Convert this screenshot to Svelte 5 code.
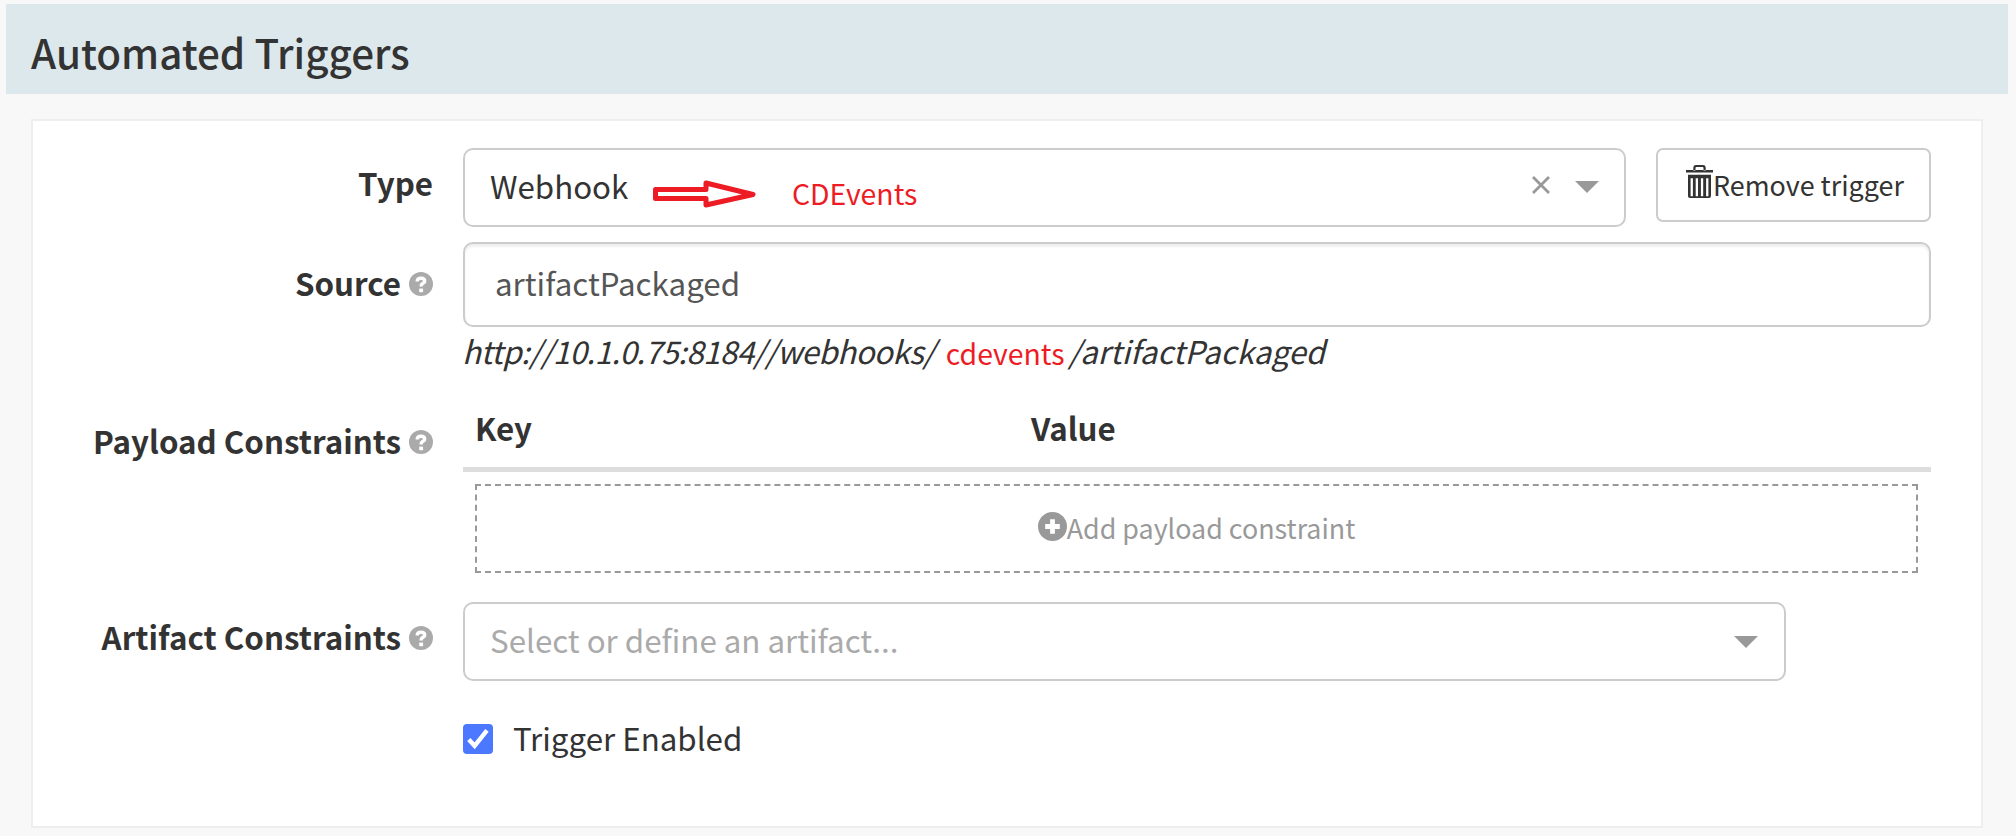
<script>
  let source = $state('artifactPackaged');
  let enabled = $state(true);
</script>

{#snippet help()}
  <svg class="help" viewBox="0 0 24 24" aria-hidden="true">
    <circle cx="12" cy="12" r="12" />
    <path d="M8.2 9.400C8.200 7 9.800 6.300 12 6.300c2.300 0 3.700 1.100 3.700 2.900 0 2.200-3.500 2-3.500 4.300v.9" />
    <rect x="10.200" y="16.600" width="3.900" height="3.600" />
  </svg>
{/snippet}

{#snippet caret()}
  <svg class="caret" viewBox="0 0 24 12" aria-hidden="true"><path d="M0 0h24L12 12z" /></svg>
{/snippet}

<main>
  <header><h1>Automated Triggers</h1></header>

  <section class="card">
    <div class="row type-row">
      <div class="label">Type</div>
      <div class="field split">
        <div class="select">
          <span class="value">Webhook</span>
          <svg class="arrow" viewBox="0 0 104 28" aria-hidden="true">
            <path d="M2.500 9.500H53V3L100 14.500 53 25v-6.500H2.500z" />
          </svg>
          <span class="note">CDEvents</span>
          <span class="grow"></span>
          <svg class="clear" viewBox="0 0 18 18" aria-hidden="true"><path d="M1 1l16 16M17 1L1 17" /></svg>
          {@render caret()}
        </div>
        <button>
          <svg class="trash" viewBox="0 0 27 33" aria-hidden="true">
            <path d="M0 5h27v2.400H0zM7.300 5.500V3Q7.300 0 10 0h7q2.700 0 2.700 3v2.500h-2.200V3q0-1-1-1h-6q-1 0-1 1v2.500zM2 9.700h23V31q0 2-2 2H4q-2 0-2-2zM4.600 13.200V31.300h2.300V13.200zM9.700 13.200V31.300h2.300V13.200zM14.900 13.200V31.300h2.300V13.200zM20.100 13.200V31.300h2.300V13.200z" fill-rule="evenodd" />
          </svg><span>Remove trigger</span>
        </button>
      </div>
    </div>

    <div class="row source-row">
      <div class="label">Source {@render help()}</div>
      <div class="field">
        <input type="text" bind:value={source} />
        <div class="url"><i class="host">http://10.1.0.75:8184//webhooks/</i><span class="note">cdevents</span><i>/{source}</i></div>
      </div>
    </div>

    <div class="row payload-row">
      <div class="label">Payload Constraints {@render help()}</div>
      <div class="field">
        <div class="thead"><span>Key</span><span>Value</span></div>
        <div class="add">
          <svg class="plus" viewBox="0 0 29 29" aria-hidden="true">
            <circle cx="14.500" cy="14.500" r="14.500" />
            <path d="M14.500 7.200v14.600M7.200 14.500h14.600" />
          </svg>Add payload constraint
        </div>
      </div>
    </div>

    <div class="row artifact-row">
      <div class="label">Artifact Constraints {@render help()}</div>
      <div class="field">
        <div class="select artifact">
          <span class="placeholder">Select or define an artifact...</span>
          <span class="grow"></span>
          {@render caret()}
        </div>
      </div>
    </div>

    <div class="row enabled-row">
      <div class="label"></div>
      <label class="check">
        <input type="checkbox" bind:checked={enabled} />
        <svg class="box" viewBox="0 0 30 30" aria-hidden="true">
          <rect width="30" height="30" rx="4" />
          {#if enabled}<path d="M5.800 15.500l5.800 6.300L24 6.300" />{/if}
        </svg>
        <span>Trigger Enabled</span>
      </label>
    </div>
  </section>
</main>

<style>
  :global(body) { margin: 0; background: #f8f8f8; }
  main {
    box-sizing: border-box;
    width: 2016px;
    height: 836px;
    padding: 4px 8px 0 6px;
    overflow: hidden;
    background: #f8f8f8;
    color: #333;
    font: 31.3px/40px "Noto Sans CJK SC", "Source Sans Pro", sans-serif;
  }
  svg { display: block; flex: none; }
  header { height: 90px; padding-left: 25px; background: #dde8ec; }
  h1 { margin: 0; font-size: 40.4px; font-weight: 500; line-height: 95px; }
  .card {
    box-sizing: border-box;
    display: flex;
    flex-direction: column;
    width: 1952px;
    height: 709px;
    margin: 25px 0 0 25px;
    padding: 27px 50px 0 0;
    border: 2px solid #eee;
    background: #fff;
  }
  .row { display: grid; grid-template-columns: 400px 1468px; column-gap: 30px; align-items: start; }
  .label { display: flex; justify-content: flex-end; gap: 8px; font-weight: 700; }
  .help { width: 24px; height: 24px; margin-top: 9px; fill: #aaa; }
  .help path { fill: none; stroke: #fff; stroke-width: 3.4; }
  .help rect { fill: #fff; }

  .type-row { height: 94px; }
  .type-row .label { padding-top: 15px; }
  .split { display: flex; justify-content: space-between; align-items: flex-start; }
  .select {
    box-sizing: border-box;
    display: flex;
    align-items: center;
    width: 1163px;
    height: 79px;
    padding: 0 25px;
    border: 2px solid #ccc;
    border-radius: 10px;
    background: #fff;
  }
  .grow { flex: 1; }
  .note { color: #ed1c24; font-size: 28.4px; }
  .value { padding-bottom: 4px; }
  .arrow {
    align-self: flex-start;
    width: 104px;
    height: 28px;
    margin: 30px 0 0 25px;
    fill: none;
    stroke: #ed1c24;
    stroke-width: 5;
    stroke-linejoin: round;
  }
  .select .note { margin: 10px 0 0 34.500px; }
  .clear { width: 18px; height: 18px; margin: 0 25px 5px 0; stroke: #999; stroke-width: 2.8; }
  .caret { width: 24px; height: 12px; margin-bottom: 1px; fill: #999; }
  button {
    box-sizing: border-box;
    display: flex;
    align-items: flex-start;
    width: 275px;
    height: 74px;
    padding: 15px 0 0 28px;
    border: 2px solid #ccc;
    border-radius: 7px;
    background: #fff;
    color: #333;
    font: 26.9px/36px "Noto Sans CJK SC", "Source Sans Pro", sans-serif;
    white-space: nowrap;
  }
  button span { margin-top: 2px; }
  .trash { width: 27px; height: 33px; fill: #333; }

  .source-row { height: 161px; }
  .source-row .label { padding-top: 21px; }
  input[type="text"] {
    box-sizing: border-box;
    display: block;
    width: 1468px;
    height: 85px;
    padding: 0 30px 4px;
    border: 2px solid #ccc;
    border-radius: 10px;
    outline: 0;
    background: #fff;
    box-shadow: inset 0 2.5px 2.5px rgba(0, 0, 0, 0.075);
    color: #555;
    font: 31.3px/44px "Noto Sans CJK SC", "Source Sans Pro", sans-serif;
  }
  .url { display: flex; align-items: flex-start; margin-left: -1px; padding-top: 4px; white-space: nowrap; }
  .url .host { letter-spacing: -0.55px; }
  .url .note { margin: 2px 4px 0 11px; }

  .payload-row { height: 199px; }
  .payload-row .label { padding-top: 18px; }
  .thead {
    display: grid;
    grid-template-columns: 556px 1fr;
    height: 64px;
    padding-left: 12px;
    border-bottom: 5px solid #ddd;
    font-weight: 700;
    line-height: 49px;
  }
  .add {
    box-sizing: border-box;
    display: flex;
    justify-content: center;
    height: 89px;
    margin: 12px 13px 0 12px;
    padding-top: 22px;
    border: 2px dashed #999;
    color: #999;
    font-size: 26.85px;
  }
  .plus { width: 29px; height: 29px; margin-top: 4px; fill: #999; }
  .plus path { fill: none; stroke: #fff; stroke-width: 4.8; }

  .artifact-row { height: 122px; }
  .artifact-row .label { padding-top: 15px; }
  .artifact { width: 1323px; padding-right: 26px; }
  .artifact .caret { margin-bottom: 0; }
  .placeholder { padding-bottom: 3px; color: #aaa; }

  .check { display: flex; align-items: flex-start; }
  .check input { appearance: none; width: 0; height: 0; margin: 0; }
  .box { width: 30px; height: 30px; fill: #4c78ff; }
  .box path { fill: none; stroke: #fff; stroke-width: 4.4; }
  .check span { margin: -6px 0 0 20px; }
</style>
